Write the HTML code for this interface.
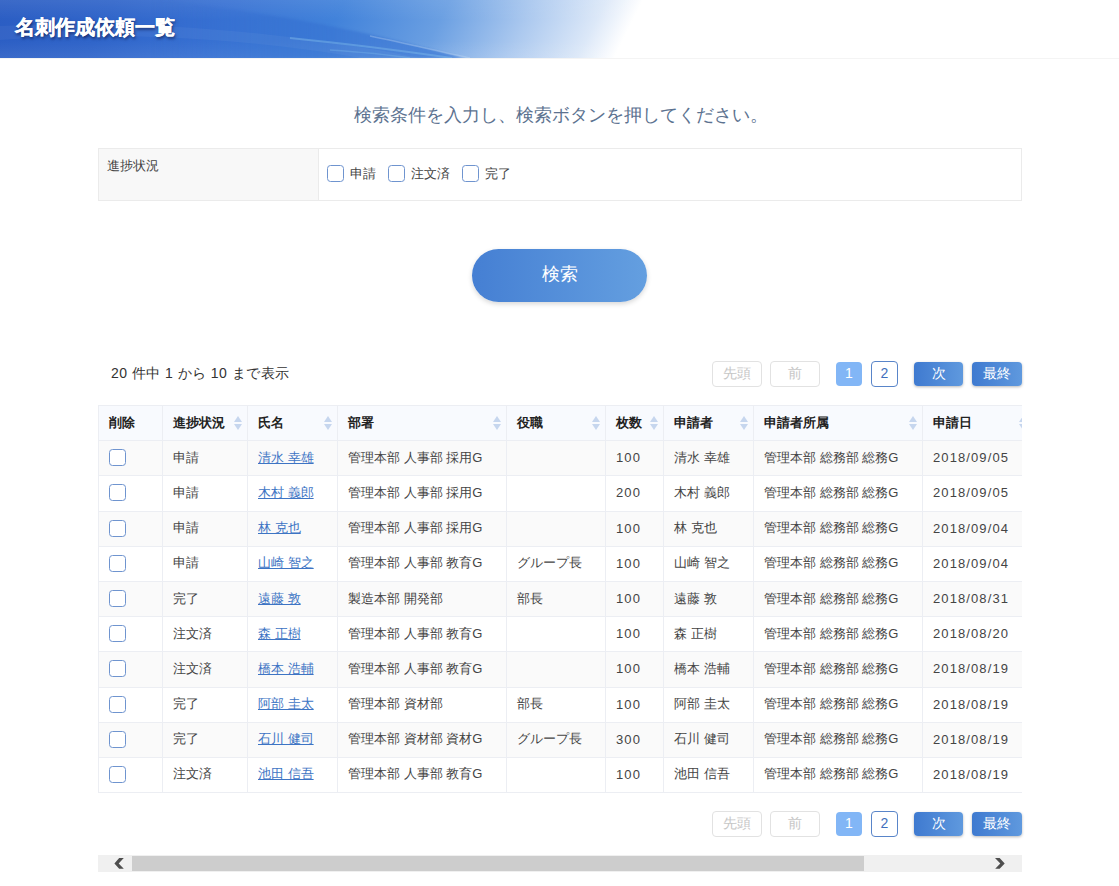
<!DOCTYPE html>
<html lang="ja">
<head>
<meta charset="utf-8">
<title>名刺作成依頼一覧</title>
<style>
*{box-sizing:border-box;margin:0;padding:0}
html,body{width:1119px;height:886px;overflow:hidden;background:#fff}
body{font-family:"Liberation Sans",sans-serif;font-size:13px;color:#333;position:relative}
.hdr{position:absolute;left:0;top:0;width:1119px;height:59px;border-bottom:1px solid #f4f4f4;overflow:hidden}
.hdr svg{position:absolute;left:0;top:0}
.hdr h1{position:absolute;left:15px;top:14px;-webkit-text-stroke:.4px #fff;font-size:20px;line-height:26px;font-weight:bold;color:#fff;white-space:nowrap;
 text-shadow:1px 2px 3px rgba(0,0,40,.6)}
.lead{position:absolute;left:1px;top:101px;width:1119px;text-align:center;font-size:18px;line-height:28px;color:#5c7290;white-space:nowrap}
.cond{position:absolute;left:98px;top:148px;width:924px;height:53px;border:1px solid #ebebeb;background:#fff}
.cond .lbl{position:absolute;left:0;top:0;width:220px;height:51px;background:#f8f8f8;border-right:1px solid #ebebeb;padding:8px 8px;font-size:13px;line-height:18px;color:#444}
.ck{position:absolute;width:17px;height:17px;border:1px solid #6f94cf;border-radius:3.5px;background:#fff}
.cl{position:absolute;font-size:13px;line-height:18px;color:#444;white-space:nowrap}
.sbtn{position:absolute;left:472px;top:249px;width:175px;height:53px;border-radius:27px;
 background:linear-gradient(90deg,#457fd3 0,#649fe0 100%);color:#fff;font-size:18px;line-height:51px;text-align:center;
 box-shadow:0 2px 5px rgba(0,0,0,.16)}
.info{position:absolute;left:111px;top:363px;letter-spacing:.45px;font-size:14px;line-height:20px;color:#333;white-space:nowrap}
.pg{position:absolute;height:26px;font-size:14px;line-height:22px;text-align:center;white-space:nowrap;border-radius:4px}
.pg.dis{border:1px solid #e2e2e2;color:#c6c6c6;background:#fff}
.pg.cur{background:#82b6f6;color:#fff;margin-top:1px;height:24px}
.pg.num{border:1px solid #5985c9;color:#3f6fbd;background:#fff}
.pg.act{background:linear-gradient(90deg,#3f7ad0 0,#5f99de 100%);color:#fff;margin-top:1px;height:24px;box-shadow:0 1px 3px rgba(0,0,0,.28)}
.twrap{position:absolute;left:98px;top:405px;width:924px;height:390px;overflow:hidden}
table{border-collapse:collapse;table-layout:fixed;width:1180px}
th,td{border:1px solid #eceef3;height:35.2px;padding:0 10px;font-size:13px;text-align:left;white-space:nowrap;overflow:hidden;vertical-align:middle;color:#444}
td{padding-bottom:1px}
th{background:#f8fafe;font-weight:bold;position:relative;color:#222}
tr.e td{background:#fafafa}
td.n{letter-spacing:1.1px}
td a{color:#3d74c4;text-decoration:underline}
.tck{display:block;width:17px;height:17px;border:1px solid #6f94cf;border-radius:3.5px;background:#fff}
.so{position:absolute;right:5px;top:10px;width:8px;height:15px}
.so:before,.so:after{content:"";position:absolute;left:0;border-left:4px solid transparent;border-right:4px solid transparent}
.so:before{top:0;border-bottom:6px solid #c6d6ee}
.so:after{top:8px;border-top:6px solid #c6d6ee}
.sb{position:absolute;left:98px;top:855px;width:924px;height:17px;background:#f0f0f0}
.sb .th{position:absolute;left:34px;top:1px;width:732px;height:15px;background:#cdcdcd}
.sb svg{position:absolute;top:0;left:0}
</style>
</head>
<body>
<div class="hdr">
<svg width="1119" height="58" viewBox="0 0 1119 58">
<defs>
<linearGradient id="hg" x1="0" y1="0" x2="895.2" y2="447.6" gradientUnits="userSpaceOnUse"><stop offset="0.0000" stop-color="#2b5dc3"/><stop offset="0.1019" stop-color="#2f64c9"/><stop offset="0.2002" stop-color="#3871d3"/><stop offset="0.3083" stop-color="#4182da"/><stop offset="0.4021" stop-color="#6a9fe2"/><stop offset="0.4799" stop-color="#acc9ef"/><stop offset="0.5416" stop-color="#dce8f8"/><stop offset="0.5746" stop-color="#ffffff"/><stop offset="1.0000" stop-color="#ffffff"/></linearGradient>
<linearGradient id="hv" x1="0" y1="0" x2="0" y2="58" gradientUnits="userSpaceOnUse">
<stop offset="0" stop-color="#fff" stop-opacity=".08"/><stop offset="0.35" stop-color="#fff" stop-opacity="0"/><stop offset="0.7" stop-color="#fff" stop-opacity="0"/><stop offset="1" stop-color="#fff" stop-opacity=".07"/>
</linearGradient>
<linearGradient id="hd" x1="150" y1="0" x2="440" y2="0" gradientUnits="userSpaceOnUse">
<stop offset="0" stop-color="#3068cc" stop-opacity="0"/><stop offset="0.5" stop-color="#336dcf" stop-opacity=".45"/><stop offset="1" stop-color="#3b78d5" stop-opacity=".7"/>
</linearGradient>
</defs>
<rect width="1119" height="58" fill="url(#hg)"/>
<rect width="1119" height="58" fill="url(#hv)"/>
<path d="M150 0 C290 14 385 36 462 58 L0 58 L0 0 Z" fill="url(#hd)" style="filter:blur(1.2px)"/>
<path d="M0 26 C150 18 300 34 420 58 L360 58 C260 40 120 30 0 40 Z" fill="#fff" fill-opacity=".045"/>
<path d="M290 38 C350 44 410 52 452 58" fill="none" stroke="#86c4ee" stroke-opacity=".4" stroke-width="1.8" style="filter:blur(.6px)"/>
<path d="M330 50 C360 52 390 55 410 58" fill="none" stroke="#86c4ee" stroke-opacity=".3" stroke-width="1.4" style="filter:blur(.6px)"/>
<path d="M370 36 C410 44 440 52 470 58" fill="none" stroke="#cfe6f8" stroke-opacity=".3" stroke-width="1.4" style="filter:blur(.6px)"/>
</svg>
<h1>名刺作成依頼一覧</h1></div>
<div class="lead">検索条件を入力し、検索ボタンを押してください。</div>
<div class="cond">
 <div class="lbl">進捗状況</div>
 <span class="ck" style="left:228px;top:16px"></span><span class="cl" style="left:250.5px;top:16px">申請</span>
 <span class="ck" style="left:289px;top:16px"></span><span class="cl" style="left:311.5px;top:16px">注文済</span>
 <span class="ck" style="left:363px;top:16px"></span><span class="cl" style="left:385.5px;top:16px">完了</span>
</div>
<div class="sbtn">検索</div>
<div class="info">20 件中 1 から 10 まで表示</div>

<div class="pg dis" style="left:712px;top:361px;width:50px">先頭</div>
<div class="pg dis" style="left:770px;top:361px;width:50px">前</div>
<div class="pg cur" style="left:836px;top:361px;width:26px">1</div>
<div class="pg num" style="left:871px;top:361px;width:27px">2</div>
<div class="pg act" style="left:914px;top:361px;width:49px">次</div>
<div class="pg act" style="left:972px;top:361px;width:50px">最終</div>

<div class="twrap">
<table>
<colgroup><col style="width:64px"><col style="width:85px"><col style="width:90px"><col style="width:169px"><col style="width:99px"><col style="width:58px"><col style="width:90px"><col style="width:169px"><col style="width:110px"><col style="width:246px"></colgroup>
<thead><tr><th>削除</th><th>進捗状況<i class="so"></i></th><th>氏名<i class="so"></i></th><th>部署<i class="so"></i></th><th>役職<i class="so"></i></th><th>枚数<i class="so"></i></th><th>申請者<i class="so"></i></th><th>申請者所属<i class="so"></i></th><th>申請日<i class="so"></i></th><th></th></tr></thead>
<tbody>
<tr class="e"><td><i class="tck"></i></td><td>申請</td><td><a>清水 幸雄</a></td><td>管理本部 人事部 採用G</td><td></td><td class="n">100</td><td>清水 幸雄</td><td>管理本部 総務部 総務G</td><td class="n">2018/09/05</td><td></td></tr>
<tr><td><i class="tck"></i></td><td>申請</td><td><a>木村 義郎</a></td><td>管理本部 人事部 採用G</td><td></td><td class="n">200</td><td>木村 義郎</td><td>管理本部 総務部 総務G</td><td class="n">2018/09/05</td><td></td></tr>
<tr class="e"><td><i class="tck"></i></td><td>申請</td><td><a>林 克也</a></td><td>管理本部 人事部 採用G</td><td></td><td class="n">100</td><td>林 克也</td><td>管理本部 総務部 総務G</td><td class="n">2018/09/04</td><td></td></tr>
<tr><td><i class="tck"></i></td><td>申請</td><td><a>山崎 智之</a></td><td>管理本部 人事部 教育G</td><td>グループ長</td><td class="n">100</td><td>山崎 智之</td><td>管理本部 総務部 総務G</td><td class="n">2018/09/04</td><td></td></tr>
<tr class="e"><td><i class="tck"></i></td><td>完了</td><td><a>遠藤 敦</a></td><td>製造本部 開発部</td><td>部長</td><td class="n">100</td><td>遠藤 敦</td><td>管理本部 総務部 総務G</td><td class="n">2018/08/31</td><td></td></tr>
<tr><td><i class="tck"></i></td><td>注文済</td><td><a>森 正樹</a></td><td>管理本部 人事部 教育G</td><td></td><td class="n">100</td><td>森 正樹</td><td>管理本部 総務部 総務G</td><td class="n">2018/08/20</td><td></td></tr>
<tr class="e"><td><i class="tck"></i></td><td>注文済</td><td><a>橋本 浩輔</a></td><td>管理本部 人事部 教育G</td><td></td><td class="n">100</td><td>橋本 浩輔</td><td>管理本部 総務部 総務G</td><td class="n">2018/08/19</td><td></td></tr>
<tr><td><i class="tck"></i></td><td>完了</td><td><a>阿部 圭太</a></td><td>管理本部 資材部</td><td>部長</td><td class="n">100</td><td>阿部 圭太</td><td>管理本部 総務部 総務G</td><td class="n">2018/08/19</td><td></td></tr>
<tr class="e"><td><i class="tck"></i></td><td>完了</td><td><a>石川 健司</a></td><td>管理本部 資材部 資材G</td><td>グループ長</td><td class="n">300</td><td>石川 健司</td><td>管理本部 総務部 総務G</td><td class="n">2018/08/19</td><td></td></tr>
<tr><td><i class="tck"></i></td><td>注文済</td><td><a>池田 信吾</a></td><td>管理本部 人事部 教育G</td><td></td><td class="n">100</td><td>池田 信吾</td><td>管理本部 総務部 総務G</td><td class="n">2018/08/19</td><td></td></tr>
</tbody>
</table>
</div>

<div class="pg dis" style="left:712px;top:811px;width:50px">先頭</div>
<div class="pg dis" style="left:770px;top:811px;width:50px">前</div>
<div class="pg cur" style="left:836px;top:811px;width:26px">1</div>
<div class="pg num" style="left:871px;top:811px;width:27px">2</div>
<div class="pg act" style="left:914px;top:811px;width:49px">次</div>
<div class="pg act" style="left:972px;top:811px;width:50px">最終</div>

<div class="sb"><div class="th"></div>
<svg width="924" height="17" viewBox="0 0 924 17"><path d="M25.8 3.1 L21.15 3.1 L16.4 8.4 L21.15 13.8 L25.8 13.8 L20.7 8.4 Z" fill="#4e4e4e"/><path d="M897 3.1 L901.65 3.1 L906.7 8.4 L901.65 13.8 L897.2 13.8 L902.3 8.4 Z" fill="#4e4e4e"/></svg>
</div>
</body>
</html>
